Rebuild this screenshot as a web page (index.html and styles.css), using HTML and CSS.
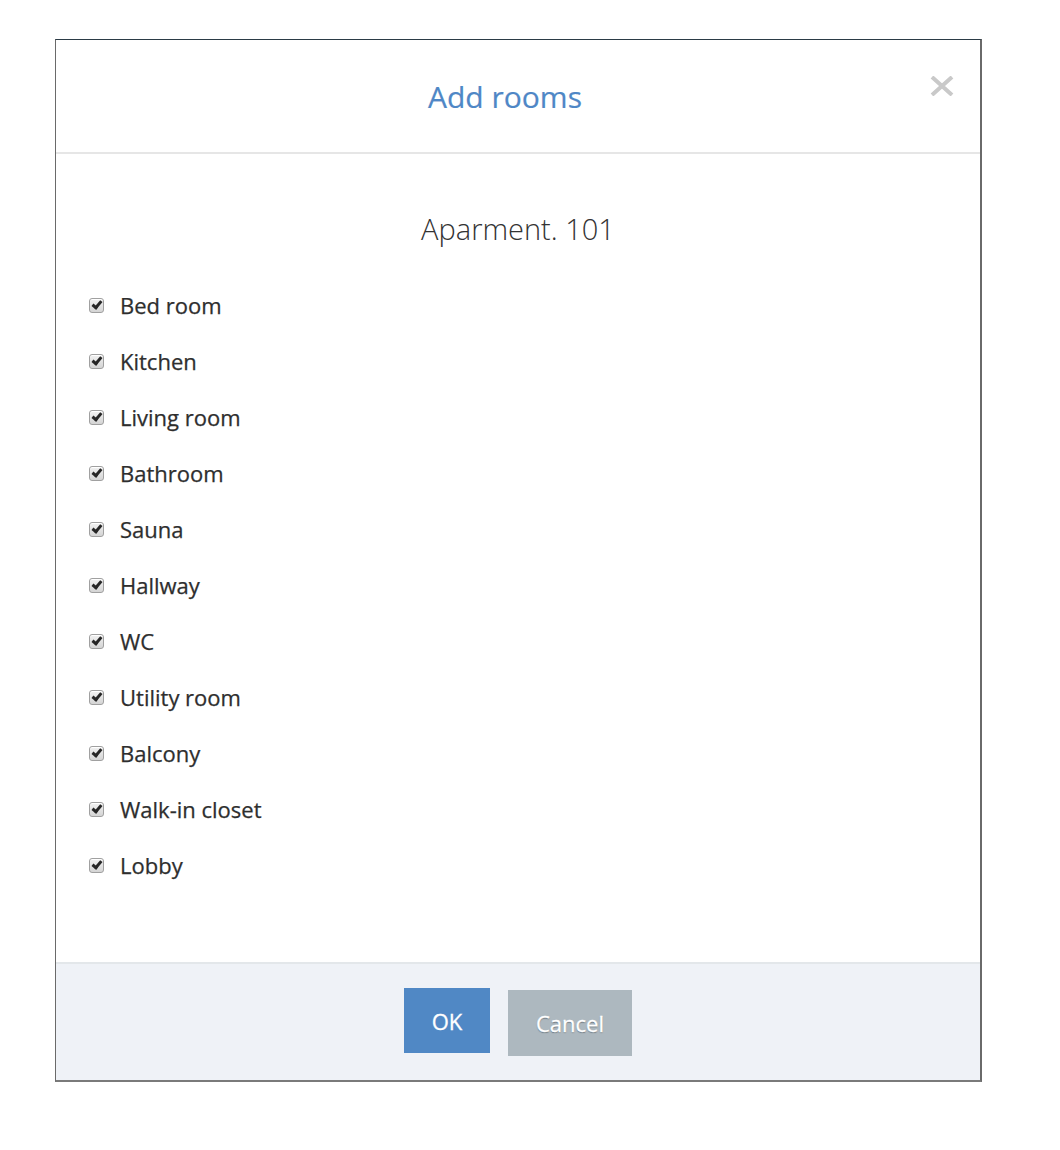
FILE: index.html
```html
<!DOCTYPE html>
<html lang="en">
<head>
<meta charset="utf-8">
<title>Add rooms</title>
<link rel="stylesheet" href="styles.css">
</head>
<body>
<div class="modal">
  <header class="modal-header">
    <h1 class="modal-title">Add rooms</h1>
    <button class="close" type="button" aria-label="Close">
      <svg width="26" height="20" viewBox="0 0 26 20"><path d="M3 1 L23 19 M23 1 L3 19" stroke="#c9c9c9" stroke-width="4" fill="none"/></svg>
    </button>
  </header>
  <section class="modal-body">
    <h2 class="unit-name">Aparment. 101</h2>
    <ul class="room-list">
      <li class="room"><span class="check"></span><span class="room-label">Bed room</span></li>
      <li class="room"><span class="check"></span><span class="room-label">Kitchen</span></li>
      <li class="room"><span class="check"></span><span class="room-label">Living room</span></li>
      <li class="room"><span class="check"></span><span class="room-label">Bathroom</span></li>
      <li class="room"><span class="check"></span><span class="room-label">Sauna</span></li>
      <li class="room"><span class="check"></span><span class="room-label">Hallway</span></li>
      <li class="room"><span class="check"></span><span class="room-label">WC</span></li>
      <li class="room"><span class="check"></span><span class="room-label">Utility room</span></li>
      <li class="room"><span class="check"></span><span class="room-label">Balcony</span></li>
      <li class="room"><span class="check"></span><span class="room-label">Walk-in closet</span></li>
      <li class="room"><span class="check"></span><span class="room-label">Lobby</span></li>
    </ul>
  </section>
  <footer class="modal-footer">
    <button class="btn btn-primary" type="button">OK</button>
    <button class="btn btn-secondary" type="button">Cancel</button>
  </footer>
</div>
</body>
</html>
```

FILE: styles.css
```css
html, body {
  margin: 0;
  padding: 0;
  background: #ffffff;
}

body {
  font-family: "Open Sans", "Liberation Sans", sans-serif;
  color: #333;
  padding: 39px 0 0 55px;
}

.modal {
  width: 924px;
  height: 1040px;
  display: flex;
  flex-direction: column;
  background: #fff;
  border-left: 1px solid #6a6a6a;
  border-right: 2px solid #6a6a6a;
  border-top: 1px solid #2b3b46;
  border-bottom: 2px solid #7a7a7a;
}

.modal-header {
  height: 112px;
  flex: none;
  display: flex;
  align-items: flex-start;
  padding: 0 25px;
  border-bottom: 2px solid #e6e6e6;
}

.modal-title {
  flex: 1;
  margin: 37px 0 0 0;
  text-align: center;
  font-size: 30px;
  font-weight: 400;
  line-height: 40px;
  color: #4f87c6;
  -webkit-text-stroke: 0.2px #4f87c6;
}

.close {
  flex: none;
  margin-top: 36px;
  width: 26px;
  height: 20px;
  padding: 0;
  border: 0;
  background: none;
  cursor: pointer;
}

.close svg {
  display: block;
}

.modal-body {
  flex: 1;
  padding: 55px 33px 0 33px;
}

.unit-name {
  margin: 0 0 41px 0;
  text-align: center;
  font-size: 29px;
  font-weight: 300;
  line-height: 40px;
  color: #333;
}

.room-list {
  list-style: none;
  margin: 0;
  padding: 0;
  display: flex;
  flex-direction: column;
  gap: 26px;
}

.room {
  display: flex;
  align-items: center;
  height: 30px;
}

.check {
  position: relative;
  flex: none;
  width: 13px;
  height: 13px;
  margin-right: 16px;
  border: 1px solid #a0a0a0;
  border-radius: 3px;
  background: linear-gradient(#f2f2f2, #d4d4d4);
  box-shadow: inset 0 1px 0 #fff;
}

.check::after {
  content: "";
  position: absolute;
  left: 4px;
  top: 0px;
  width: 3px;
  height: 7px;
  border: solid #262626;
  border-width: 0 3px 3px 0;
  transform: rotate(40deg);
}

.room-label {
  font-size: 22px;
  line-height: 30px;
  color: #2e2e2e;
  -webkit-text-stroke: 0.25px #2e2e2e;
}

.modal-footer {
  flex: none;
  height: 118px;
  display: flex;
  justify-content: center;
  align-items: flex-start;
  gap: 18px;
  padding-top: 24px;
  box-sizing: border-box;
  background: #eff2f7;
  border-top: 2px solid #e3e7ea;
}

.btn {
  border: 0;
  padding: 0;
  font-family: "Open Sans", "Liberation Sans", sans-serif;
  font-size: 22px;
  color: #fff;
  -webkit-text-stroke: 0.3px #fff;
  cursor: pointer;
}

.btn-primary {
  width: 86px;
  height: 65px;
  background: #5088c5;
}

.btn-secondary {
  width: 124px;
  height: 66px;
  margin-top: 2px;
  background: #adb8bf;
  text-shadow: 0 1px 1px rgba(60, 70, 80, 0.6);
}
```
